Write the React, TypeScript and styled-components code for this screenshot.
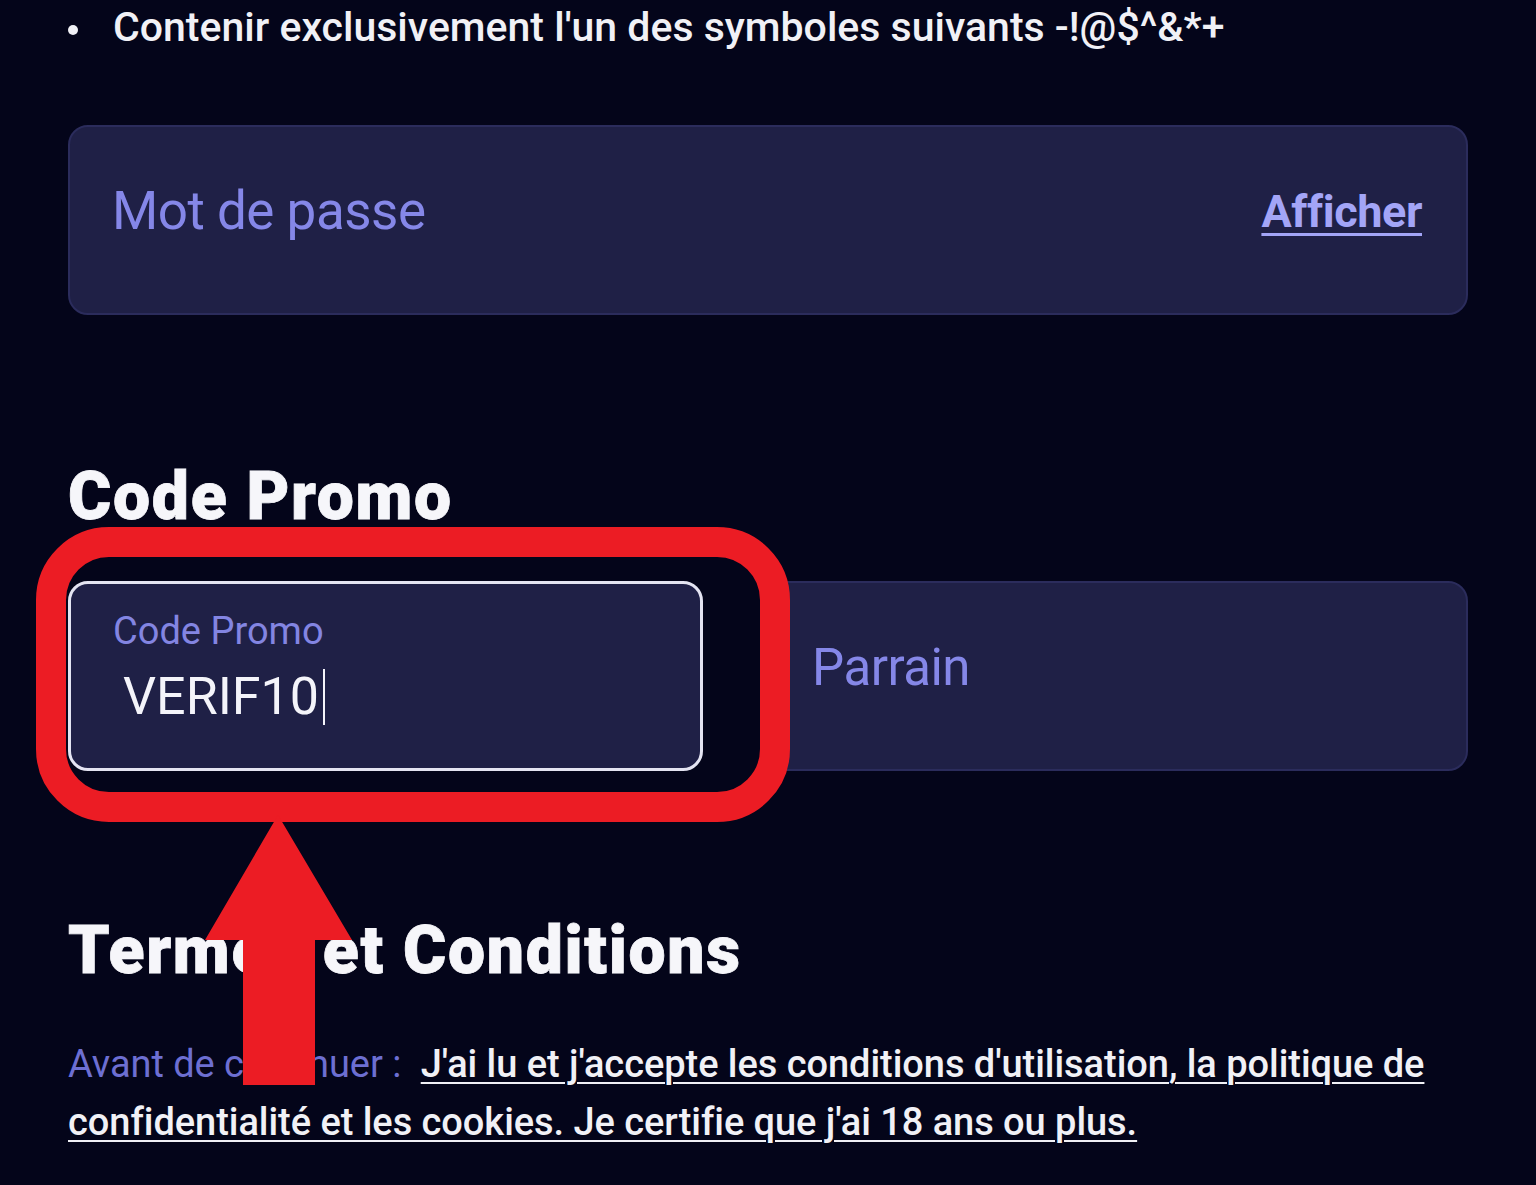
import styled, { createGlobalStyle } from 'styled-components';

const GlobalStyle = createGlobalStyle`
  html,
  body {
    margin: 0;
    padding: 0;
    background-color: #04051a;
  }

  body {
    font-family: Roboto, 'Noto Sans', 'Liberation Sans', sans-serif;
    color: #f4f4f8;
  }
`;

type FieldProps = {
  $focused?: boolean;
};

const App = () => {
  return (
    <>
      <GlobalStyle />
      <Page>
        <RuleList>
          <RuleItem>Contenir exclusivement l'un des symboles suivants -!@$^&amp;*+</RuleItem>
        </RuleList>

        <Field>
          <Placeholder>Mot de passe</Placeholder>
          <ShowButton type="button">Afficher</ShowButton>
        </Field>

        <SectionTitle $top={142}>Code Promo</SectionTitle>
        <PromoRow>
          <Field $focused>
            <FloatingBox>
              <FloatingLabel>Code Promo</FloatingLabel>
              <Value>
                VERIF10
                <Caret />
              </Value>
            </FloatingBox>
          </Field>
          <Field>
            <Placeholder $small>Parrain</Placeholder>
          </Field>
        </PromoRow>

        <SectionTitle $top={140}>Termes et Conditions</SectionTitle>
        <Terms>
          <TermsIntro>Avant de continuer : </TermsIntro>
          <TermsLink href="#">
            J'ai lu et j'accepte les conditions d'utilisation, la politique de confidentialité et les
            cookies. Je certifie que j'ai 18 ans ou plus.
          </TermsLink>
        </Terms>

        <Annotation width="1536" height="1185" viewBox="0 0 1536 1185">
          <rect x="51" y="542" width="724" height="265" rx="58" fill="none" stroke="#ec1c24" strokeWidth="30" />
          <polygon points="278,815 352,940 315,940 315,1085 243,1085 243,940 205,940" fill="#ec1c24" />
        </Annotation>
      </Page>
    </>
  );
};

export default App;

const Page = styled.main`
  position: relative;
  width: 1536px;
  height: 1185px;
  box-sizing: border-box;
  padding: 0 68px;
  overflow: hidden;
`;

const RuleList = styled.ul`
  margin: 0;
  padding: 4px 0 0;
  list-style: none;
`;

const RuleItem = styled.li`
  position: relative;
  padding-left: 45px;
  font-size: 41px;
  font-weight: 500;
  line-height: 46px;
  letter-spacing: 0;
  color: #f1f1f6;

  &::before {
    content: '';
    position: absolute;
    left: 0;
    top: 21px;
    width: 10px;
    height: 10px;
    border-radius: 50%;
    background-color: #f1f1f6;
  }
`;

const Field = styled.div<FieldProps>`
  box-sizing: border-box;
  height: 190px;
  display: flex;
  align-items: center;
  justify-content: space-between;
  padding: 0 44px 18px 42px;
  background-color: #1f2046;
  border: ${({ $focused }) => ($focused ? '3px solid #e4e4f2' : '2px solid #2b2c5c')};
  border-radius: 20px;

  &:first-of-type {
    margin-top: 75px;
  }
`;

const Placeholder = styled.span<{ $small?: boolean }>`
  font-size: ${({ $small }) => ($small ? '51px' : '53px')};
  color: #8587e8;
  letter-spacing: -0.5px;
`;

const ShowButton = styled.button`
  padding: 0;
  border: none;
  background: transparent;
  font-family: inherit;
  font-size: 45px;
  font-weight: 700;
  letter-spacing: -0.4px;
  color: #a3a5f7;
  text-decoration: underline;
  text-underline-offset: 6px;
  text-decoration-thickness: 3px;
  cursor: pointer;
`;

const SectionTitle = styled.h2<{ $top: number }>`
  margin: ${({ $top }) => `${$top}px 0 0`};
  font-size: 66px;
  line-height: 79px;
  font-weight: 900;
  letter-spacing: 1.7px;
  -webkit-text-stroke: 0.8px #f6f6fa;
  color: #f6f6fa;
`;

const PromoRow = styled.div`
  display: grid;
  grid-template-columns: 635px 1fr;
  gap: 65px;
  margin-top: 45px;

  & > ${Field} {
    margin-top: 0;
  }
`;

const FloatingBox = styled.div`
  display: flex;
  flex-direction: column;
  padding-top: 4px;
`;

const FloatingLabel = styled.span`
  font-size: 38px;
  line-height: 44px;
  color: #8385e2;
`;

const Value = styled.span`
  display: flex;
  align-items: center;
  margin-top: 11px;
  padding-left: 10px;
  font-size: 52px;
  line-height: 66px;
  color: #f4f4fa;
`;

const Caret = styled.span`
  display: inline-block;
  width: 2px;
  height: 56px;
  margin-left: 4px;
  background-color: #f4f4fa;
`;

const Terms = styled.p`
  margin: 45px 0 0;
  font-size: 38px;
  font-weight: 500;
  line-height: 58px;
  letter-spacing: -0.05px;
`;

const TermsIntro = styled.span`
  font-weight: 400;
  color: #6d6fd2;
  margin-right: 10px;
`;

const TermsLink = styled.a`
  color: #f1f1f6;
  text-decoration: underline;
  text-underline-offset: 5px;
  text-decoration-thickness: 2px;
`;

const Annotation = styled.svg`
  position: absolute;
  top: 0;
  left: 0;
  pointer-events: none;
`;
